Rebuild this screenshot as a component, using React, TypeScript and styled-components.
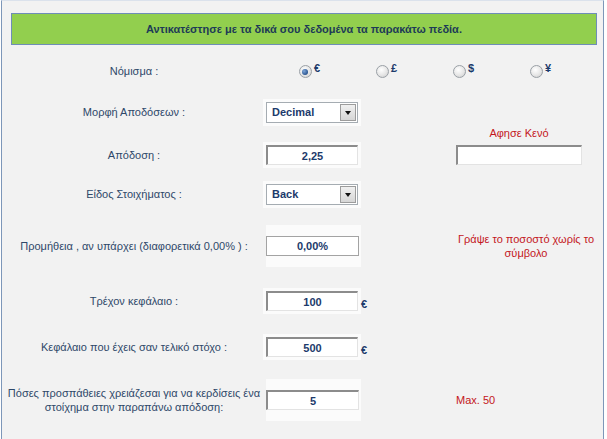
import styled, { createGlobalStyle } from "styled-components"

const GlobalStyle = createGlobalStyle`
  html, body {
    margin: 0;
    padding: 0;
    background: #ffffff;
  }
  body {
    font-family: "Liberation Sans", Arial, sans-serif;
    font-size: 11px;
  }
`

const currencies = ["€", "£", "$", "¥"]

function App() {
  return (
    <>
      <GlobalStyle />
      <Panel>
        <Banner>Αντικατέστησε με τα δικά σου δεδομένα τα παρακάτω πεδία.</Banner>

        <Row $h={32} style={{ marginTop: 10 }}>
          <Label>Νόμισμα :</Label>
          <RadioGroup>
            {currencies.map((c, index) => (
              <RadioItem key={index}>
                <RadioDot $checked={index === 0} />
                <Symbol>{c}</Symbol>
              </RadioItem>
            ))}
          </RadioGroup>
        </Row>

        <Row $h={50}>
          <Label>Μορφή Αποδόσεων :</Label>
          <Cell>
            <SelectBox>
              <SelectValue>Decimal</SelectValue>
              <ArrowButton />
            </SelectBox>
          </Cell>
          <span />
          <Note $bottom>Αφησε Κενό</Note>
        </Row>

        <Row $h={36}>
          <Label>Απόδοση :</Label>
          <Cell>
            <Field>2,25</Field>
          </Cell>
          <span />
          <WideField />
        </Row>

        <Row $h={42}>
          <Label>Είδος Στοιχήματος :</Label>
          <Cell>
            <SelectBox>
              <SelectValue>Back</SelectValue>
              <ArrowButton />
            </SelectBox>
          </Cell>
        </Row>

        <Row $h={62}>
          <Label>Προμήθεια , αν υπάρχει (διαφορετικά 0,00% ) :</Label>
          <Cell $tall>
            <Field $flat>0,00%</Field>
          </Cell>
          <span />
          <Note>
            Γράψε το ποσοστό χωρίς το
            <br />
            σύμβολο
          </Note>
        </Row>

        <Row $h={48}>
          <Label>Τρέχον κεφάλαιο :</Label>
          <Cell>
            <Field>100</Field>
          </Cell>
          <Euro>€</Euro>
        </Row>

        <Row $h={44}>
          <Label>Κεφάλαιο που έχεις σαν τελικό στόχο :</Label>
          <Cell>
            <Field>500</Field>
          </Cell>
          <Euro>€</Euro>
        </Row>

        <Row $h={62}>
          <Label>
            Πόσες προσπάθειες χρειάζεσαι για να κερδίσεις ένα
            <br />
            στοίχημα στην παραπάνω απόδοση:
          </Label>
          <Cell $tall>
            <Field>5</Field>
          </Cell>
          <span />
          <Note $left>Max. 50</Note>
        </Row>
      </Panel>
    </>
  )
}

const Panel = styled.div`
  box-sizing: border-box;
  width: 603px;
  min-height: 100vh;
  margin-left: 1px;
  background: #f2f2f2;
  border-left: 1px solid #7d97b9;
  border-right: 1px solid #7d97b9;
  border-top: 1px solid #dbe2ec;
  padding-top: 12px;
`

const Banner = styled.div`
  margin: 0 6px 0 9px;
  height: 30px;
  background: #92cf4e;
  border: 1px solid #6f8db7;
  display: flex;
  align-items: center;
  justify-content: center;
  color: #1d3b57;
  font-weight: bold;
  font-size: 11px;
`

const Row = styled.div<{ $h: number }>`
  display: grid;
  grid-template-columns: 264px 95px 95px 1fr;
  height: ${(p) => p.$h}px;
  align-items: center;
`

const Label = styled.div`
  text-align: center;
  color: #2e4869;
  font-size: 11px;
  line-height: 14px;
  white-space: nowrap;
`

const RadioGroup = styled.div`
  grid-column: 2 / 5;
  display: flex;
  padding-left: 5px;
`

const RadioItem = styled.div`
  width: 77px;
  display: flex;
  justify-content: center;
  align-items: flex-start;
  gap: 2px;
`

const RadioDot = styled.span<{ $checked?: boolean }>`
  box-sizing: border-box;
  width: 13px;
  height: 13px;
  margin-top: 1px;
  border-radius: 50%;
  border: 1px solid #9aa0a6;
  background: radial-gradient(circle at 40% 35%, #ffffff 0%, #e6e6e6 55%, #c9c9c9 100%);
  position: relative;

  &::after {
    content: "";
    display: ${(p) => (p.$checked ? "block" : "none")};
    position: absolute;
    left: 2.5px;
    top: 2.5px;
    width: 6px;
    height: 6px;
    border-radius: 50%;
    background: radial-gradient(circle at 35% 35%, #7ea6d8 0%, #2b5591 70%, #1a3c70 100%);
  }
`

const Symbol = styled.span`
  color: #1c3a6b;
  font-weight: bold;
  font-size: 11px;
  line-height: 12px;
  margin-top: -2px;
`

const Cell = styled.div<{ $tall?: boolean }>`
  background: #fbfbfb;
  display: flex;
  align-items: center;
  height: ${(p) => (p.$tall ? "42px" : "auto")};
  padding: ${(p) => (p.$tall ? "0 1px 0 0" : "3px 3px 3px 0")};
  margin-left: ${(p) => (p.$tall ? "0" : "-3px")};
  padding-left: ${(p) => (p.$tall ? "0" : "3px")};
`

const SelectBox = styled.div`
  box-sizing: border-box;
  width: 92px;
  height: 21px;
  background: #ffffff;
  border: 1px solid #a5acb2;
  display: flex;
  align-items: center;
  justify-content: space-between;
  padding: 0 1px 0 5px;
`

const SelectValue = styled.span`
  color: #1c3a6b;
  font-weight: bold;
  font-size: 11px;
`

const ArrowButton = styled.span`
  box-sizing: border-box;
  width: 16px;
  height: 17px;
  background: linear-gradient(#f0f0f0, #d6d6d6);
  border: 1px solid #9c9c9c;
  display: flex;
  align-items: center;
  justify-content: center;

  &::after {
    content: "";
    border-left: 3.5px solid transparent;
    border-right: 3.5px solid transparent;
    border-top: 4px solid #111111;
    margin-top: 2px;
  }
`

const Field = styled.div<{ $flat?: boolean }>`
  box-sizing: border-box;
  width: 93px;
  height: 20px;
  background: #ffffff;
  display: flex;
  align-items: center;
  justify-content: center;
  color: #1c3a6b;
  font-weight: bold;
  font-size: 11px;
  border-style: solid;
  border-width: ${(p) => (p.$flat ? "1px" : "2px 1px 1px 2px")};
  border-color: ${(p) =>
    p.$flat ? "#a3a3a3" : "#8c8c8c #e3e3e3 #e3e3e3 #8c8c8c"};
`

const WideField = styled.div`
  box-sizing: border-box;
  width: 126px;
  height: 20px;
  background: #ffffff;
  border-style: solid;
  border-width: 2px 1px 1px 2px;
  border-color: #8c8c8c #e3e3e3 #e3e3e3 #8c8c8c;
`

const Euro = styled.span`
  color: #1c3a6b;
  font-weight: bold;
  font-size: 11px;
  padding-top: 6px;
`

const Note = styled.div<{ $bottom?: boolean; $left?: boolean }>`
  color: #c4161c;
  font-size: 11px;
  line-height: 14px;
  text-align: ${(p) => (p.$left ? "left" : "center")};
  width: ${(p) => (p.$left ? "auto" : p.$bottom ? "126px" : "140px")};
  align-self: ${(p) => (p.$bottom ? "end" : "center")};
  margin-bottom: ${(p) => (p.$bottom ? "-3px" : "0")};
  white-space: nowrap;
`

export default App
